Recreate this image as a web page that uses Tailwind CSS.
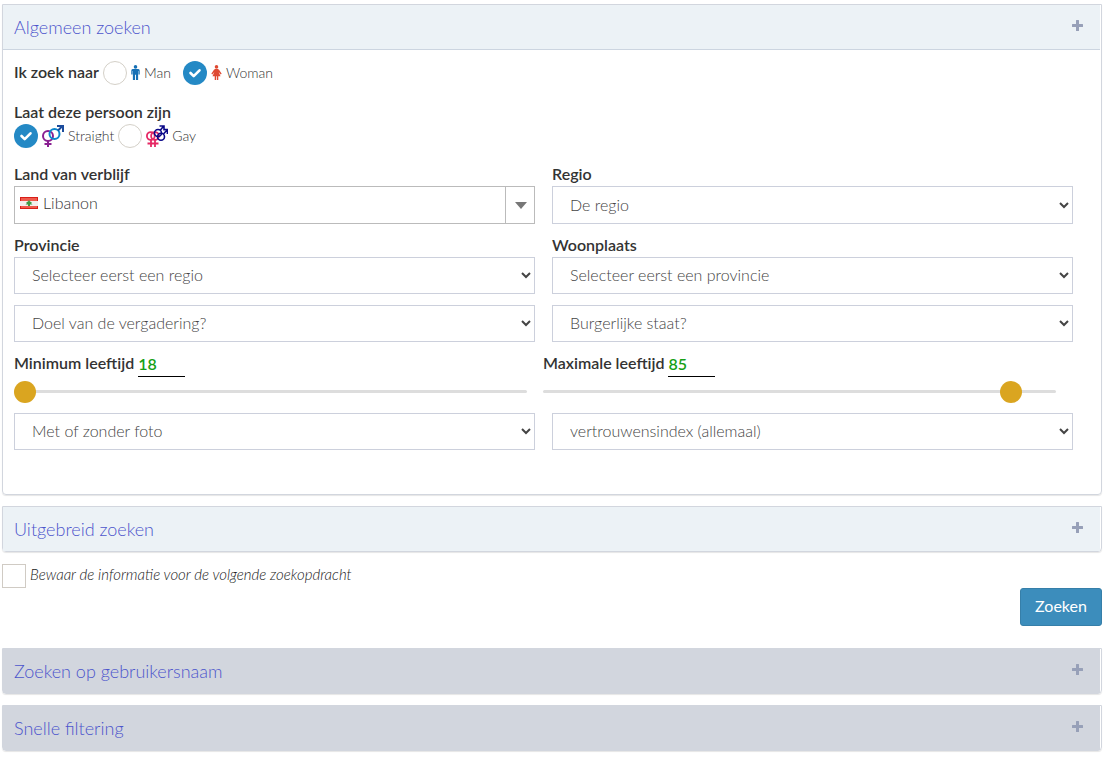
<!DOCTYPE html>
<html lang="nl">
<head>
<meta charset="utf-8">
<meta name="viewport" content="width=device-width, initial-scale=1">
<title>Zoeken</title>
<script src="https://cdn.jsdelivr.net/npm/@tailwindcss/browser@4"></script>
</head>
<body class="bg-white font-['Lato',sans-serif] text-base text-[#555]">
<svg class="hidden" aria-hidden="true">
  <symbol id="plus" viewBox="0 0 11 11"><path fill="#97a0b8" d="M4.500 0h2q.5 0 .5.500V4h3.500q.5 0 .5.500v2q0 .5-.5.500H7v3.500q0 .5-.5.500h-2q-.5 0-.5-.5V7H.5Q0 7 0 6.500v-2Q0 4 .5 4H4V.5q0-.5.5-.5z"/></symbol>
  <symbol id="check" viewBox="0 0 24 24"><path d="M7.500 12l3.200 3.200L16.500 9.300" fill="none" stroke="#fff" stroke-width="2.600" stroke-linecap="round" stroke-linejoin="round"/></symbol>
</svg>
<form class="px-[2px] pt-1 pb-2">
  <section class="rounded-b border border-[#d2d6de] shadow-[0_1px_1px_rgba(0,0,0,0.1)]">
    <header class="mr-px flex h-[45px] items-center justify-between border-b border-[#ccd5e0] bg-[#ecf2f6] pr-[17px] pl-[11px]">
      <h3 class="text-lg font-light text-[#4c55cc]">Algemeen zoeken</h3>
      <button type="button" aria-label="Algemeen zoeken uitklappen" class="pb-[3px]"><svg class="size-[11px]"><use href="#plus"/></svg></button>
    </header>
    <div class="pr-[28px] pb-[44px] pl-[11px]">
      <div class="flex h-[46px] items-center">
        <span class="mr-1 pb-[2px] leading-5 font-semibold text-[#333]">Ik zoek naar</span>
        <label class="mr-3 flex items-center text-[14px]">
          <span class="relative mr-1 size-6"><input type="radio" name="sex" class="block size-6 appearance-none rounded-full border border-[#d4d0c8] bg-white"></span>
          <svg class="mr-1 mb-[2px] h-[15px] w-[9px]" viewBox="0 0 9 16" fill="#1670b5"><circle cx="4.500" cy="2" r="1.900"/><path d="M1.500 4.300h6Q9 4.300 9 6v4.200H7.700V6.500h-.4V16H5v-5.500H4V16H1.700V6.500h-.4v3.700H0V6q0-1.700 1.500-1.700z"/></svg>
          <span class="pb-[2px] font-light text-[#333]">Man</span>
        </label>
        <label class="flex items-center text-[14px]">
          <span class="relative mr-1 size-6"><input type="radio" name="sex" checked class="block size-6 appearance-none rounded-full bg-[#2489c5]"><svg class="pointer-events-none absolute inset-0 size-6"><use href="#check"/></svg></span>
          <svg class="mr-1 mb-[2px] h-[15px] w-[11px]" viewBox="0 0 11 16" fill="#df4a32"><circle cx="5.500" cy="2" r="1.900"/><path d="M4 4.300h3L8.200 5.100 11 9.300l-1 .7-2.200-2.600L9.800 12H7.400V16H5.900v-4H5.100v4H3.600v-4H1.200L3.200 7.400 1 10 0 9.300l2.800-4.200z"/></svg>
          <span class="pb-[2px] font-light text-[#333]">Woman</span>
        </label>
      </div>
      <p class="mt-[6px] leading-5 font-semibold text-[#333]">Laat deze persoon zijn</p>
      <div class="mt-[2px] flex h-6 items-center">
        <label class="mr-1 flex items-center text-[14px]">
          <span class="relative mr-1 size-6"><input type="radio" name="orientation" checked class="block size-6 appearance-none rounded-full bg-[#2489c5]"><svg class="pointer-events-none absolute inset-0 size-6"><use href="#check"/></svg></span>
          <svg class="mr-1 size-[22px]" viewBox="0 0 22 22" fill="none" stroke-width="2"><g stroke="#8a2092"><circle cx="6" cy="11" r="5"/><path d="M6 16V22M2.500 19h7"/></g><circle cx="12.500" cy="9" r="5" stroke="#0b86cc"/><path stroke="#1c4c9c" d="M16 5.500L20.500 1M15 1h6v6"/></svg>
          <span class="pb-[2px] font-light text-[#333]">Straight</span>
        </label>
        <label class="flex items-center text-[14px]">
          <span class="relative mr-1 size-6"><input type="radio" name="orientation" class="block size-6 appearance-none rounded-full border border-[#d4d0c8] bg-white"></span>
          <svg class="mr-1 size-[22px]" viewBox="0 0 22 22" fill="none" stroke-width="1.600"><g stroke="#e52864" stroke-width="1.800"><circle cx="4.800" cy="11" r="3.900"/><circle cx="9" cy="11" r="3.900"/><path d="M5 14.500V22M9 14.500V22M1.500 18.500h11"/></g><g stroke="#0a0888"><circle cx="12" cy="8" r="3.500"/><circle cx="15" cy="11.800" r="3.500"/><path d="M14.300 5.200l3-3.700M13.500 1H18v4.500M17.500 9L21 5M17.500 4.500h3.900V9"/></g></svg>
          <span class="pb-[2px] font-light text-[#333]">Gay</span>
        </label>
      </div>
      <div class="mt-4 grid grid-cols-2 gap-x-[17px]">
        <div>
          <label id="country-label" for="country" class="block h-[22px] leading-5 font-semibold text-[#333]">Land van verblijf</label>
          <button id="country" type="button" aria-haspopup="listbox" aria-labelledby="country-label country" class="flex h-[38px] w-full border border-[#bbb] bg-white text-left">
            <span class="flex flex-1 items-center self-stretch pb-1 pl-[5px] font-light text-[#333]">
              <svg class="mr-[5px] h-3 w-[18px]" viewBox="0 0 18 12"><path fill="#d81e18" d="M0 0h18v12H0z"/><path fill="#ef5a4c" d="M1 1h16v10H1z"/><path fill="#f3efed" d="M0 4h18v5H0z"/><path fill="#3f9a45" d="M9 3l1 1.500 2 1-1 .5 1.500 1.500H10V9H8V7.500H5.500L7 6l-1-.5 2-1z"/></svg>
              Libanon
            </span>
            <span class="flex w-[29px] items-center justify-center self-stretch border-l border-[#bbb] pl-[2px]"><svg class="h-[7px] w-3" viewBox="0 0 12 7"><path fill="#777" d="M0 0h12L6 7z"/></svg></span>
          </button>
        </div>
        <div>
          <label for="region" class="block h-[22px] leading-5 font-semibold text-[#333]">Regio</label>
          <select id="region" class="block h-[38px] w-full border border-[#ccd0dc] bg-white pb-[2px] pl-[13px] font-light text-[#444]"><option>De regio</option></select>
        </div>
      </div>
      <div class="mt-[11px] grid grid-cols-2 gap-x-[17px]">
        <div>
          <label for="province" class="block h-[22px] leading-5 font-semibold text-[#333]">Provincie</label>
          <select id="province" class="block h-[37px] w-full border border-[#ccd0dc] bg-white pb-[2px] pl-[13px] font-light text-[#444]"><option>Selecteer eerst een regio</option></select>
        </div>
        <div>
          <label for="city" class="block h-[22px] leading-5 font-semibold text-[#333]">Woonplaats</label>
          <select id="city" class="block h-[37px] w-full border border-[#ccd0dc] bg-white pb-[2px] pl-[13px] font-light text-[#444]"><option>Selecteer eerst een provincie</option></select>
        </div>
      </div>
      <div class="mt-[11px] grid grid-cols-2 gap-x-[17px]">
        <select aria-label="Doel" class="h-[37px] w-full border border-[#ccd0dc] bg-white pb-[2px] pl-[13px] font-light text-[#444]"><option>Doel van de vergadering?</option></select>
        <select aria-label="Burgerlijke staat" class="h-[37px] w-full border border-[#ccd0dc] bg-white pb-[2px] pl-[13px] font-light text-[#444]"><option>Burgerlijke staat?</option></select>
      </div>
      <div class="mt-[11px] mr-[17px] grid grid-cols-2 gap-x-4">
        <div>
          <div class="flex h-6 gap-1 leading-5 font-semibold"><label for="min" class="text-[#333]">Minimum leeftijd</label><input id="min" value="18" class="h-6 w-[47px] border-b border-black pb-[3px] text-[#16a016]"></div>
          <input type="range" aria-label="Minimum leeftijd" min="18" max="90" value="18" class="mt-[13px] block h-[3px] w-full appearance-none rounded-full bg-[#ddd] [&::-webkit-slider-thumb]:size-[22px] [&::-webkit-slider-thumb]:appearance-none [&::-webkit-slider-thumb]:rounded-full [&::-webkit-slider-thumb]:bg-[#daa520]">
        </div>
        <div>
          <div class="flex h-6 gap-1 leading-5 font-semibold"><label for="max" class="text-[#333]">Maximale leeftijd</label><input id="max" value="85" class="h-6 w-[47px] border-b border-black pb-[3px] text-[#16a016]"></div>
          <input type="range" aria-label="Maximale leeftijd" min="18" max="90" value="85" class="mt-[13px] block h-[3px] w-full appearance-none rounded-full bg-[#ddd] [&::-webkit-slider-thumb]:size-[22px] [&::-webkit-slider-thumb]:appearance-none [&::-webkit-slider-thumb]:rounded-full [&::-webkit-slider-thumb]:bg-[#daa520]">
        </div>
      </div>
      <div class="mt-5 grid grid-cols-2 gap-x-[17px]">
        <select aria-label="Foto" class="h-[37px] w-full border border-[#ccd0dc] bg-white pb-[2px] pl-[13px] font-light text-[#444]"><option>Met of zonder foto</option></select>
        <select aria-label="Vertrouwensindex" class="h-[37px] w-full border border-[#ccd0dc] bg-white pb-[2px] pl-[13px] font-light text-[#444]"><option>vertrouwensindex (allemaal)</option></select>
      </div>
    </div>
  </section>

  <section class="mt-[11px] rounded-b border border-[#d2d6de] shadow-[0_1px_1px_rgba(0,0,0,0.1)]">
    <header class="mr-px flex h-[44px] items-center justify-between bg-[#ecf2f6] pr-[17px] pl-[11px]">
      <h3 class="text-lg font-light text-[#4c55cc]">Uitgebreid zoeken</h3>
      <button type="button" aria-label="Uitgebreid zoeken uitklappen" class="pb-[3px]"><svg class="size-[11px]"><use href="#plus"/></svg></button>
    </header>
  </section>

  <label class="mt-3 flex h-6 w-fit gap-1 text-[15px] italic"><input type="checkbox" class="size-6 appearance-none border border-[#d0cbc4] bg-white"><span class="leading-5 font-light text-[#222]">Bewaar de informatie voor de volgende zoekopdracht</span></label>
  <div class="flex justify-end">
    <button type="submit" class="h-[38px] w-[82px] rounded-[3px] border border-[#367fa9] bg-[#3c8dbc] pb-[2px] text-base text-white">Zoeken</button>
  </div>

  <section class="mt-[22px] rounded-b border border-[#d2d6de] shadow-[0_1px_1px_rgba(0,0,0,0.1)]">
    <header class="mr-px flex h-[44px] items-center justify-between bg-[#d2d6de] pr-[17px] pl-[11px]">
      <h3 class="text-lg font-light text-[#4c55cc]">Zoeken op gebruikersnaam</h3>
      <button type="button" aria-label="Zoeken op gebruikersnaam uitklappen" class="pb-[3px]"><svg class="size-[11px]"><use href="#plus"/></svg></button>
    </header>
  </section>
  <section class="mt-[11px] rounded-b border border-[#d2d6de] shadow-[0_1px_1px_rgba(0,0,0,0.1)]">
    <header class="mr-px flex h-[44px] items-center justify-between bg-[#d2d6de] pr-[17px] pl-[11px]">
      <h3 class="text-lg font-light text-[#4c55cc]">Snelle filtering</h3>
      <button type="button" aria-label="Snelle filtering uitklappen" class="pb-[3px]"><svg class="size-[11px]"><use href="#plus"/></svg></button>
    </header>
  </section>
</form>
</body>
</html>
